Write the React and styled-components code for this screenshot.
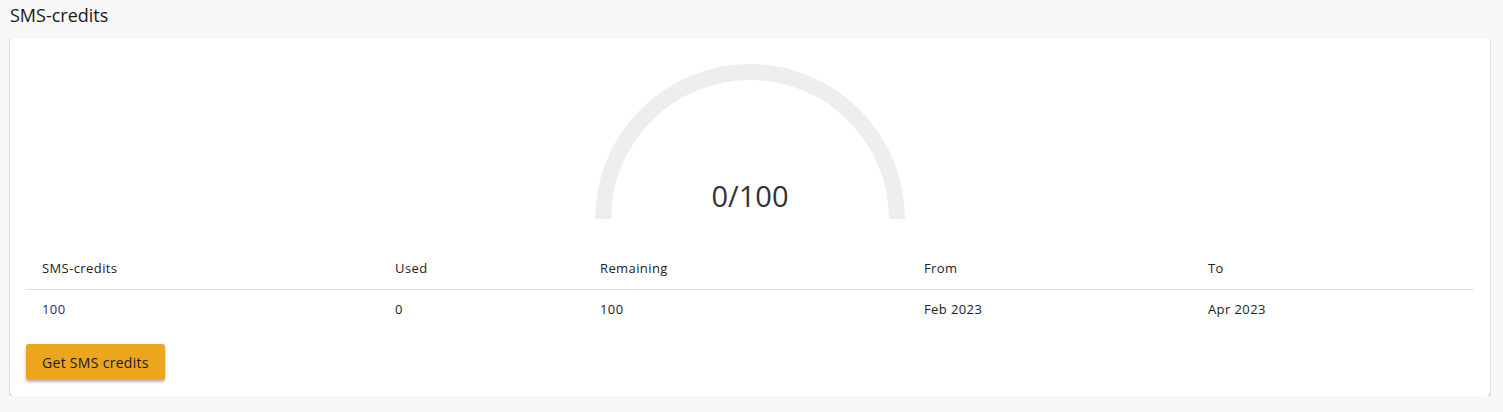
import React from 'react';
import styled, { createGlobalStyle } from 'styled-components';

const GlobalStyle = createGlobalStyle`
  body {
    margin: 0;
    background: #f8f8f8;
    font-family: "Open Sans", "Liberation Sans", sans-serif;
    color: #222;
  }
`;

const Page = styled.div`
  padding: 0 13px 0 10px;
`;

const Title = styled.h2`
  margin: 0;
  padding: 5px 0 12px;
  font-size: 18px;
  line-height: 21px;
  font-weight: 400;
  color: #1a1a1a;
`;

const Card = styled.div`
  background: #fff;
  border-radius: 4px;
  box-shadow: 0 1px 2px rgba(0, 0, 0, 0.35);
  padding: 26px 16px 16px;
`;

const Gauge = styled.div`
  position: relative;
  width: 310px;
  height: 155px;
  margin: 0 auto;
`;

const GaugeValue = styled.div`
  position: absolute;
  left: 0;
  right: 0;
  bottom: 4px;
  text-align: center;
  font-size: 29px;
  color: #333;
`;

const Table = styled.div`
  margin-top: 28px;
  display: grid;
  grid-template-columns: 353px 205px 324px 284px 1fr;
`;

const Cell = styled.div`
  display: flex;
  align-items: center;
  padding: 0 16px;
  font-size: 13px;
  letter-spacing: 0.4px;
  height: ${p => (p.$head ? '42px' : '37px')};
  color: ${p => (p.$accent ? '#1c2a78' : '#222')};
  border-top: ${p => (p.$head ? 'none' : '1px solid #e0e0e0')};
`;

const Button = styled.button`
  margin-top: 17px;
  height: 36px;
  padding: 0 16px;
  border: none;
  border-radius: 3px;
  background: #eba61e;
  color: #1a1a1a;
  font-family: inherit;
  font-size: 14px;
  letter-spacing: 0.3px;
  box-shadow: 0 2px 3px rgba(0, 0, 0, 0.3);
  cursor: pointer;
`;

const heads = ['SMS-credits', 'Used', 'Remaining', 'From', 'To'];
const values = ['100', '0', '100', 'Feb 2023', 'Apr 2023'];

export default function App() {
  return (
    <Page>
      <GlobalStyle />
      <Title>SMS-credits</Title>
      <Card>
        <Gauge>
          <svg width="310" height="155" viewBox="0 0 310 155">
            <path d="M 8 155 A 147 147 0 0 1 302 155" fill="none" stroke="#eeeeee" strokeWidth="16" />
          </svg>
          <GaugeValue>0/100</GaugeValue>
        </Gauge>
        <Table>
          {heads.map(h => (
            <Cell key={h} $head>{h}</Cell>
          ))}
          {values.map((v, i) => (
            <Cell key={i} $accent={i === 0}>{v}</Cell>
          ))}
        </Table>
        <Button>Get SMS credits</Button>
      </Card>
    </Page>
  );
}
